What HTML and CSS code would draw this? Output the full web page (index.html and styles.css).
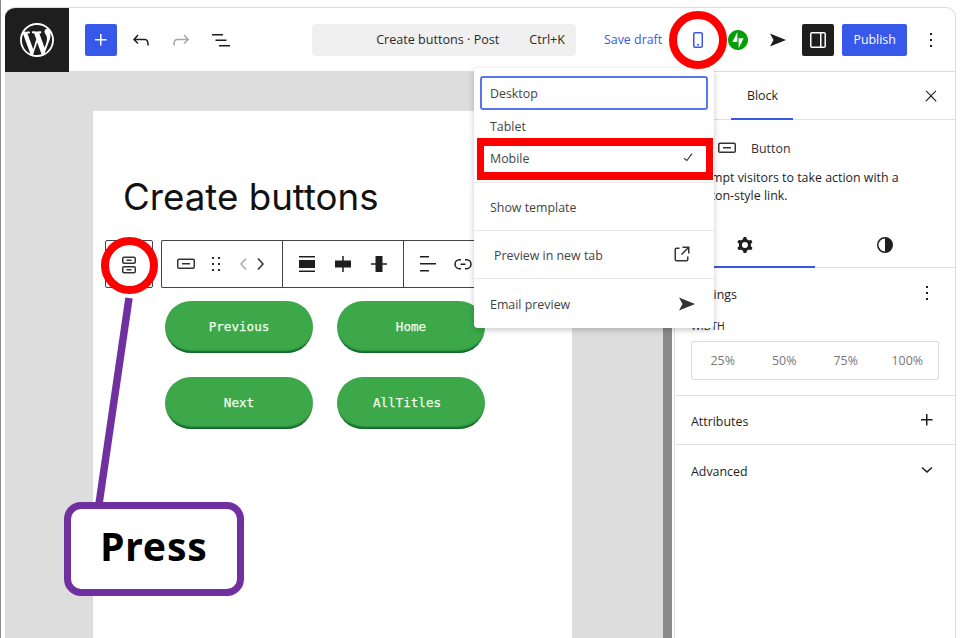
FILE: index.html
```html
<!DOCTYPE html>
<html lang="en">
<head>
<meta charset="utf-8">
<title>Create buttons</title>
<link rel="stylesheet" href="styles.css">
</head>
<body>
<svg width="0" height="0" class="defs">
  <symbol id="i-send" viewBox="0 0 24 24"><path d="M4 5.500 20 12 4 18.500 7.500 12z"/></symbol>
  <symbol id="i-more" viewBox="0 0 24 24"><path d="M13 19h-2v-2h2v2zm0-6h-2v-2h2v2zm0-6h-2V5h2v2z"/></symbol>
  <symbol id="i-button" viewBox="0 0 24 24"><path d="M8 12.5h8V11H8v1.5Z M19 6.5H5a2 2 0 0 0-2 2V15a2 2 0 0 0 2 2h14a2 2 0 0 0 2-2V8.5a2 2 0 0 0-2-2ZM5 8h14a.5.5 0 0 1 .5.5V15a.5.5 0 0 1-.5.5H5a.5.5 0 0 1-.5-.5V8.5A.5.5 0 0 1 5 8Z"/></symbol>
</svg>
<div class="frame">
  <header class="topbar">
    <a class="logo"><svg class="logo-svg" viewBox="0 0 20 20"><path d="M20 10c0-5.51-4.49-10-10-10C4.48 0 0 4.49 0 10c0 5.52 4.48 10 10 10 5.51 0 10-4.48 10-10zM7.78 15.37L4.37 6.22c.55-.02 1.17-.08 1.17-.08.5-.06.44-1.13-.06-1.11 0 0-1.45.11-2.37.11-.18 0-.37 0-.58-.01C4.12 2.69 6.87 1.11 10 1.11c2.33 0 4.45.87 6.05 2.34-.68-.11-1.65.39-1.65 1.58 0 .74.45 1.36.9 2.1.35.61.55 1.36.55 2.46 0 1.49-1.4 5-1.4 5l-3.03-8.37c.54-.02.82-.17.82-.17.5-.05.44-1.25-.06-1.22 0 0-1.44.12-2.38.12-.87 0-2.33-.12-2.33-.12-.5-.03-.56 1.2-.06 1.22l.92.08 1.26 3.41zM17.41 10c.24-.64.74-1.87.43-4.25.7 1.29 1.05 2.71 1.05 4.25 0 3.29-1.73 6.24-4.4 7.78.97-2.59 1.94-5.2 2.92-7.78zM6.1 18.09C3.12 16.65 1.11 13.53 1.11 10c0-1.3.23-2.48.72-3.59C3.25 10.3 4.67 14.2 6.1 18.09zm4.03-6.63l2.58 6.98c-.86.29-1.76.45-2.71.45-.79 0-1.57-.11-2.29-.33.81-2.38 1.62-4.74 2.42-7.1z"/></svg></a>
    <div class="tools">
      <span class="btn btn-primary"><svg viewBox="0 0 24 24"><path d="M11 12.5V17.5H12.5V12.5H17.5V11H12.5V6H11V11H6V12.5H11Z"/></svg></span>
      <span class="btn"><svg viewBox="0 0 24 24"><path d="M18.3 11.7c-.6-.6-1.4-.9-2.3-.9H6.7l2.9-3.3-1.1-1-4.5 5L8.5 16l1-1-2.7-2.7H16c.5 0 .9.2 1.3.5 1 1 1 3.4 1 4.5v.3h1.5v-.2c0-1.5 0-4.3-1.5-5.7z"/></svg></span>
      <span class="btn btn-off"><svg viewBox="0 0 24 24"><path d="M15.6 6.5l-1.1 1 2.9 3.3H8c-.9 0-1.7.3-2.3.9-1.4 1.5-1.4 4.2-1.4 5.6v.2h1.5v-.3c0-1.1 0-3.5 1-4.5.3-.3.7-.5 1.3-.5h9.2L14.5 15l1.1 1.1 4.6-4.6-4.6-5z"/></svg></span>
      <span class="btn"><svg viewBox="0 0 24 24"><path d="M3 6h11v1.5H3V6Zm3.5 5.5h11V13h-11v-1.5ZM21 17H10v1.5h11V17Z"/></svg></span>
    </div>
    <div class="command"><span>Create buttons · Post</span><span>Ctrl+K</span></div>
    <a class="save">Save draft</a>
    <div class="actions">
      <span class="btn btn-blue"><svg viewBox="0 0 24 24"><path d="M15 4H9c-1.1 0-2 .9-2 2v12c0 1.1.9 2 2 2h6c1.1 0 2-.9 2-2V6c0-1.1-.9-2-2-2zm.5 14c0 .3-.2.5-.5.5H9c-.3 0-.5-.2-.5-.5V6c0-.3.2-.5.5-.5h6c.3 0 .5.2.5.5v12zm-4.5-.5h2V16h-2v1.5z"/></svg></span>
      <span class="btn btn-jet"><svg viewBox="0 0 32 32"><path fill-rule="evenodd" d="M16 0C7.2 0 0 7.2 0 16s7.2 16 16 16 16-7.2 16-16S24.8 0 16 0zM15 19H7l8-16zM17 29V13h8z"/></svg></span>
      <span class="btn"><svg><use href="#i-send"/></svg></span>
      <span class="btn btn-dark"><svg viewBox="0 0 24 24"><path d="M18 4H6c-1.1 0-2 .9-2 2v12c0 1.1.9 2 2 2h12c1.1 0 2-.9 2-2V6c0-1.1-.9-2-2-2zm-4 14.5H6c-.3 0-.5-.2-.5-.5V6c0-.3.2-.5.5-.5h8v13zm4.5-.5c0 .3-.2.5-.5.5h-2.5v-13H18c.3 0 .5.2.5.5v12z"/></svg></span>
      <span class="publish">Publish</span>
      <span class="btn"><svg><use href="#i-more"/></svg></span>
    </div>
  </header>
  <main class="workspace">
    <section class="canvas">
      <article class="page">
        <h1 class="title">Create buttons</h1>
        <div class="block-bar">
          <span class="parent"><svg viewBox="0 0 24 24"><path d="M14.5 17.5H9.5V16H14.5V17.5Z M14.5 8H9.5V6.5H14.5V8Z M7 3.5H17C18.1 3.5 19 4.4 19 5.5V9C19 10.1 18.1 11 17 11H7C5.9 11 5 10.1 5 9V5.5C5 4.4 5.9 3.5 7 3.5ZM17 5H7C6.7 5 6.5 5.2 6.5 5.5V9C6.5 9.3 6.7 9.5 7 9.5H17C17.3 9.5 17.5 9.3 17.5 9V5.5C17.5 5.2 17.3 5 17 5Z M7 13H17C18.1 13 19 13.9 19 15V18.5C19 19.6 18.1 20.5 17 20.5H7C5.9 20.5 5 19.6 5 18.5V15C5 13.9 5.9 13 7 13ZM17 14.5H7C6.7 14.5 6.5 14.7 6.5 15V18.5C6.5 18.8 6.7 19 7 19H17C17.3 19 17.5 18.8 17.5 18.5V15C17.5 14.7 17.3 14.5 17 14.5Z"/></svg></span>
          <div class="toolbar">
            <div class="group group-a">
              <svg class="tb"><use href="#i-button"/></svg>
              <svg class="tb" viewBox="0 0 24 24"><path d="M8 7h2V5H8v2zm0 6h2v-2H8v2zm0 6h2v-2H8v2zm6-14v2h2V5h-2zm0 8h2v-2h-2v2zm0 6h2v-2h-2v2z"/></svg>
              <span class="movers">
                <svg class="chev chev-off" viewBox="0 0 24 24"><path d="M14.6 7l-1.2-1L8 12l5.4 6 1.2-1-4.6-5z"/></svg>
                <svg class="chev" viewBox="0 0 24 24"><path d="M10.6 6L9.4 7l4.6 5-4.6 5 1.2 1 5.4-6z"/></svg>
              </span>
            </div>
            <div class="group group-b">
              <svg class="tb" viewBox="0 0 24 24"><path d="M4 4h16v1.5H4zM4 18.500h16V20H4zM4 8h16v8H4z"/></svg>
              <svg class="tb" viewBox="0 0 24 24"><path d="M11.250 4h1.500v4.500H20v7h-7.250V20h-1.500v-4.500H4v-7h7.250z"/></svg>
              <svg class="tb" viewBox="0 0 24 24"><path d="M8.500 4h7v7.250H20v1.500h-4.500V20h-7v-7.250H4v-1.500h4.500z"/></svg>
            </div>
            <div class="group group-c">
              <svg class="tb" viewBox="0 0 24 24"><path d="M13 5.500H4V4h9v1.500Zm7 7H4V11h16v1.500Zm-7 7H4V18h9v1.500Z"/></svg>
              <svg class="tb" viewBox="0 0 24 24"><path d="M10 17.389H8.444A5.194 5.194 0 1 1 8.444 7H10v1.500H8.444a3.694 3.694 0 0 0 0 7.389H10v1.500ZM14 7h1.556a5.194 5.194 0 0 1 0 10.390H14v-1.500h1.556a3.694 3.694 0 0 0 0-7.390H14V7Zm-4.500 6h5v-1.500h-5V13Z"/></svg>
            </div>
          </div>
        </div>
        <div class="buttons">
          <a class="pill">Previous</a>
          <a class="pill">Home</a>
          <a class="pill">Next</a>
          <a class="pill pill-shift">AllTitles</a>
        </div>
      </article>
    </section>
    <div class="scroll"><span class="thumb"></span></div>
    <aside class="sidebar">
      <div class="side-tabs">
        <span class="side-tab">Block</span>
        <span class="btn side-close"><svg viewBox="0 0 24 24"><path d="M13 11.800l6.100-6.300-1-1-6.100 6.200-6.100-6.200-1 1 6.100 6.300-6.500 6.700 1 1 6.500-6.600 6.500 6.600 1-1z"/></svg></span>
      </div>
      <div class="card">
        <div class="card-head"><svg class="tb"><use href="#i-button"/></svg><span>Button</span></div>
        <p class="card-text">Prompt visitors to take action with a button-style link.</p>
      </div>
      <div class="style-tabs">
        <span class="style-tab style-tab-on"><svg viewBox="0 0 24 24"><path fill-rule="evenodd" d="M10.289 4.836A1 1 0 0 1 11.275 4h1.306a1 1 0 0 1 .987.836l.244 1.466c.787.26 1.503.679 2.108 1.218l1.393-.522a1 1 0 0 1 1.216.437l.653 1.13a1 1 0 0 1-.23 1.273l-1.148.944a6.025 6.025 0 0 1 0 2.435l1.149.946a1 1 0 0 1 .23 1.272l-.653 1.13a1 1 0 0 1-1.216.437l-1.394-.522c-.605.54-1.32.958-2.108 1.218l-.244 1.466a1 1 0 0 1-.987.836h-1.306a1 1 0 0 1-.986-.836l-.244-1.466a5.995 5.995 0 0 1-2.108-1.218l-1.394.522a1 1 0 0 1-1.217-.436l-.653-1.131a1 1 0 0 1 .23-1.272l1.149-.946a6.026 6.026 0 0 1 0-2.435l-1.148-.944a1 1 0 0 1-.23-1.272l.653-1.131a1 1 0 0 1 1.217-.437l1.393.522a5.994 5.994 0 0 1 2.108-1.218l.244-1.466ZM14.929 12a3 3 0 1 1-6 0 3 3 0 0 1 6 0Z"/></svg></span>
        <span class="style-tab"><svg viewBox="0 0 24 24"><path fill-rule="evenodd" d="M12 4a8 8 0 1 0 0 16 8 8 0 0 0 0-16Zm0 1.500v13a6.500 6.500 0 0 1 0-13Z"/></svg></span>
      </div>
      <div class="panel panel-settings">
        <div class="panel-head"><span>Settings</span><svg class="pi"><use href="#i-more"/></svg></div>
        <div class="width-label">WIDTH</div>
        <div class="width-group"><span>25%</span><span>50%</span><span>75%</span><span>100%</span></div>
      </div>
      <div class="panel panel-row">
        <span class="row-label">Attributes</span>
        <svg class="pi" viewBox="0 0 24 24"><path d="M11 12.500V17.500H12.500V12.500H17.500V11H12.500V6H11V11H6V12.500H11Z"/></svg>
      </div>
      <div class="panel panel-row panel-last">
        <span class="row-label">Advanced</span>
        <svg class="pi" viewBox="0 0 24 24"><path d="M17.500 10l-5.500 5-5.500-5 1-1.100 4.500 4.100 4.500-4.100z"/></svg>
      </div>
    </aside>
  </main>
  <nav class="menu">
    <div class="menu-sec">
      <div class="menu-item menu-focus">Desktop</div>
      <div class="menu-item">Tablet</div>
      <div class="menu-item"><span>Mobile</span><svg class="mi mi-check" viewBox="0 0 24 24"><path d="M16.700 7.100l-6.300 8.500-3.300-2.500-.9 1.200 4.500 3.400L17.900 7.900z"/></svg></div>
    </div>
    <div class="menu-sec menu-tight"><div class="menu-item">Show template</div></div>
    <div class="menu-sec menu-tight"><div class="menu-item menu-indent"><span>Preview in new tab</span><svg class="mi mi-ext" viewBox="0 0 24 24"><path d="M19.500 4.500h-7V6h4.440l-5.970 5.970 1.060 1.060L18 7.060v4.440h1.500v-7Zm-13 1a2 2 0 0 0-2 2v10a2 2 0 0 0 2 2h10a2 2 0 0 0 2-2v-3H17v3a.5.5 0 0 1-.5.5h-10a.5.5 0 0 1-.5-.5v-10a.5.5 0 0 1 .5-.5h3V5.500h-3Z"/></svg></div></div>
    <div class="menu-sec menu-last"><div class="menu-item"><span>Email preview</span><svg class="mi"><use href="#i-send"/></svg></div></div>
  </nav>
</div>
<svg class="marks" viewBox="0 0 960 638">
  <circle cx="698" cy="40" r="25" class="ring"/>
  <circle cx="129.500" cy="265.500" r="24.500" class="ring"/>
  <line x1="129" y1="298" x2="99" y2="504" class="leader"/>
</svg>
<div class="red-box"></div>
<div class="press">Press</div>
</body>
</html>
```
FILE: styles.css
```css
* { box-sizing: border-box; }
html, body { margin: 0; height: 638px; overflow: hidden; }
body {
  position: relative;
  background: #fff;
  border-left: 1px solid #8a8a8a;
  font-family: "Open Sans", "Noto Sans", sans-serif;
  font-size: 12.400px;
  color: #1e1e1e;
}
.defs { position: absolute; }
svg { fill: currentColor; display: block; }

.frame {
  position: relative;
  margin: 7px 4px 0 4px;
  height: 631px;
  border-top: 1px solid #ddd;
  border-right: 1px solid #ddd;
  border-radius: 10px 10px 0 0;
  overflow: hidden;
  display: flex;
  flex-direction: column;
}

.topbar { height: 64px; flex: none; display: flex; align-items: center; border-bottom: 1px solid #ddd; }
.logo { width: 64px; height: 64px; background: #1e1e1e; color: #fff; display: flex; align-items: center; justify-content: center; flex: none; margin-bottom: -1px; }
.logo-svg { width: 34px; height: 34px; }
.tools, .actions { display: flex; align-items: center; gap: 8px; }
.tools { margin-left: 16px; }
.btn { width: 32px; height: 32px; display: flex; align-items: center; justify-content: center; border-radius: 2px; flex: none; }
.btn svg { width: 24px; height: 24px; }
.btn-primary { background: #3858e9; color: #fff; }
.btn-off { color: #a7a7a7; }
.btn-blue { color: #3858e9; }
.btn-jet { color: #069e08; }
.btn-jet svg { width: 20px; height: 20px; }
.btn-dark { background: #1e1e1e; color: #fff; }
.command { width: 264px; height: 32px; margin-left: 75px; padding-right: 11px; background: #f0f0f0; border-radius: 4px; display: flex; align-items: center; justify-content: flex-end; gap: 30px; font-size: 12.600px; color: #2a2a2a; }
.save { margin-left: 28px; margin-right: 20px; color: #3858e9; white-space: nowrap; }
.publish { width: 65px; height: 32px; background: #3858e9; color: #fff; border-radius: 2px; display: flex; align-items: center; justify-content: center; }

.workspace { flex: 1; display: flex; min-height: 0; }
.canvas { width: 658px; flex: none; background: #ddd; padding: 39px 0 0 88px; overflow: hidden; }
.page { width: 479px; height: 600px; background: #fff; }
.title { margin: 0; padding: 62px 0 0 30px; height: 129px; font-family: Inter, sans-serif; font-size: 36.700px; font-weight: 400; line-height: 48px; color: #111; }
.block-bar { display: flex; gap: 8px; margin-left: 12px; height: 48px; }
.parent { width: 48px; height: 48px; border: 1px solid #444; border-radius: 2px; display: flex; align-items: center; justify-content: center; }
.parent svg { width: 24px; height: 24px; margin-top: 1px; color: #333; }
.toolbar { flex: 1; display: flex; border: 1px solid #444; border-right: 0; border-radius: 2px 0 0 2px; background: #fff; }
.group { display: flex; align-items: center; border-right: 1px solid #444; height: 46px; }
.group-a { width: 121px; padding-left: 12px; gap: 6px; }
.group-b { width: 121px; padding-left: 12px; gap: 12px; }
.group-c { padding-left: 12px; gap: 11px; border-right: 0; }
.tb { width: 24px; height: 24px; flex: none; color: #333; }
.group-b .tb, .group-c .tb { color: #1e1e1e; }
.movers { display: flex; margin-left: -2px; width: 32px; }
.chev { width: 24px; height: 24px; flex: none; color: #333; margin-right: -8px; }
.chev-off { color: #a7a7a7; }
.buttons { margin: 13px 0 0 72px; display: grid; grid-template-columns: 148px 148px; grid-auto-rows: 52px; gap: 24px; }
.pill { background: #3ca84a; color: #f2fbe9; border-radius: 26px; display: flex; align-items: center; justify-content: center; padding-bottom: 2px; font-family: "DejaVu Sans Mono", monospace; font-size: 12.600px; -webkit-text-stroke: .25px #f2fbe9; box-shadow: inset 0 -4px 2px -2px #14622a; }
.pill-shift { padding-right: 8px; }

.scroll { width: 11px; flex: none; background: #fff; }
.thumb { display: block; width: 9px; height: 100%; background: #8a8a8a; }
.sidebar { width: 281px; flex: none; background: #fff; border-left: 1px solid #ddd; }
.side-tabs { height: 48px; display: flex; justify-content: space-between; align-items: center; padding: 0 8px 0 56px; border-bottom: 1px solid #e0e0e0; }
.side-tab { width: 62px; height: 48px; padding: 1px 0 0 1px; display: flex; align-items: center; justify-content: center; border-bottom: 2px solid #3858e9; }
.side-close svg { width: 18px; height: 18px; }
.card { padding: 16px 16px 0 16px; height: 105px; }
.card-head { display: flex; align-items: center; gap: 12px; padding-left: 24px; height: 24px; }
.card-head span { color: #333; }
.card-text { margin: 9px 0 0; line-height: 18px; width: 235px; }
.style-tabs { display: flex; height: 43px; border-bottom: 1px solid #e0e0e0; }
.style-tab { flex: 1; display: flex; align-items: flex-start; justify-content: center; padding-top: 8px; height: 43px; }
.style-tab svg { width: 24px; height: 24px; }
.style-tab-on { border-bottom: 2px solid #3858e9; }
.panel { padding: 0 16px; border-bottom: 1px solid #e0e0e0; }
.panel-settings { height: 128px; }
.panel-head { display: flex; justify-content: space-between; align-items: center; height: 50px; }
.panel-head span { padding-top: 2px; }
.pi { width: 24px; height: 24px; flex: none; }
.width-label { font-size: 10.500px; height: 15px; line-height: 15px; margin-top: 1px; }
.width-group { margin-top: 7px; width: 248px; height: 39px; border: 1px solid #ddd; border-radius: 2px; display: grid; grid-template-columns: repeat(4, 1fr); align-items: center; justify-items: center; color: #777; }
.panel-row { height: 49px; display: flex; align-items: center; justify-content: space-between; }
.row-label { padding-top: 3px; }
.panel-last { border-bottom: 0; }

.menu { position: absolute; left: 469px; top: 60px; width: 240px; background: #fff; border-radius: 4px; box-shadow: 0 2px 6px rgba(0, 0, 0, .22); color: #444; }
.menu-sec { padding: 8px 6px; border-top: 1px solid #e6e6e6; }
.menu-sec:first-child { border-top: 0; }
.menu-tight { padding-bottom: 7px; }
.menu-last { padding-top: 9px; }
.menu-item { height: 32px; display: flex; align-items: center; justify-content: space-between; padding: 0 9px 0 10px; }
.menu-focus { height: 34px; border: 2px solid #5a75ec; border-radius: 3px; padding-left: 8px; }
.menu-indent { padding-left: 14px; }
.mi { width: 24px; height: 24px; flex: none; color: #333; }
.mi-check { width: 18px; height: 18px; margin-right: 2px; margin-top: -2px; }
.mi-ext { margin-right: 5px; margin-top: -2px; }

.marks { position: absolute; left: -1px; top: 0; width: 960px; height: 638px; pointer-events: none; }
.ring { fill: none; stroke: #f00; stroke-width: 8; }
.leader { stroke: #7030a0; stroke-width: 7.500; }
.red-box { position: absolute; left: 476px; top: 138px; width: 236px; height: 42px; border-style: solid; border-color: #f00; border-width: 8px 7px; }
.press { position: absolute; left: 63px; top: 502px; width: 180px; height: 94px; padding-bottom: 7px; background: #fff; border: 7px solid #7030a0; border-radius: 17px; display: flex; align-items: center; justify-content: center; font-family: "Noto Sans", sans-serif; font-size: 39px; letter-spacing: .8px; font-weight: 700; color: #000; }
```
